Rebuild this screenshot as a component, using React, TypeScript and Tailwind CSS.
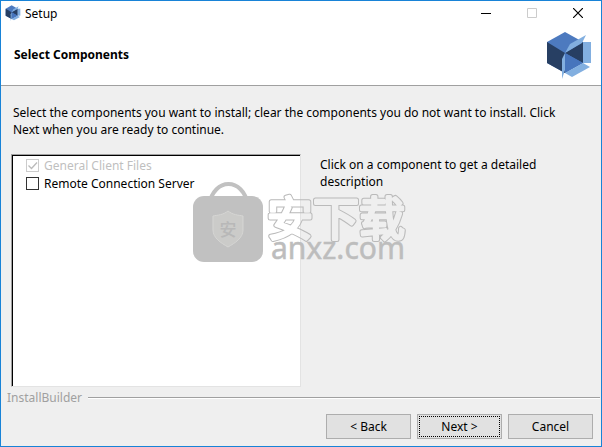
import React from "react";

const components = [
  { id: "client", label: "General Client Files", checked: true, locked: true },
  { id: "server", label: "Remote Connection Server", checked: false, locked: false },
];

const BoxLogo = ({ className }: { className: string }) => (
  <svg viewBox="0 0 46 48" className={className} aria-hidden="true">
    <path d="M1 11 19 1l18 10v21L19 42 1 32z" fill="#4d7abf" />
    <path d="M1 11l18 11v20L1 32z" fill="#273f63" />
    <path d="M19 22l18-11v21z" fill="#273f63" />
    <path d="M19 22 37 32 19 42z" fill="#4775bd" />
    <path d="M37 11h8v21h-8z" fill="#82afe0" />
    <path d="M19 22l5-9L40 4l-4 8z" fill="#82afe0" />
    <path d="M19 22v17l-3 9V28z" fill="#82afe0" />
    <path d="M19 42l18-10 7 4-18 10z" fill="#82afe0" />
  </svg>
);

const Watermark = () => (
  <svg
    viewBox="0 0 220 92"
    className="pointer-events-none absolute top-[27px] left-[181px] h-[92px] w-[220px]"
    aria-hidden="true"
  >
    <defs>
      <mask id="hollow" maskUnits="userSpaceOnUse" x="0" y="0" width="220" height="92">
        <rect width="220" height="92" fill="#fff" />
        <text
          x="75"
          y="54"
          fontSize="46"
          stroke="#000"
          strokeWidth="3"
          strokeLinejoin="round"
          fontFamily="Noto Sans CJK SC, sans-serif"
        >
          安下载
        </text>
      </mask>
    </defs>
    <path d="M17 24C22-4 51-4 56 24" fill="none" stroke="#c1c1c1" strokeWidth="4" />
    <rect x="1" y="15" width="70" height="66" rx="11" fill="#c1c1c1" />
    <path
      d="M36 30c5 4 10 4 15 5v14c0 8-8 13-15 17-7-4-15-9-15-17V35c5-1 10-1 15-5z"
      fill="#cbcbc9"
      stroke="#d6d6d4"
    />
    <text x="36" y="55" textAnchor="middle" fontSize="17" fontWeight="500" fill="#b8b8b8" fontFamily="Noto Sans CJK SC, sans-serif">
      安
    </text>
    <text
      x="75"
      y="54"
      fontSize="46"
      fill="#bababa"
      stroke="#bababa"
      strokeWidth="5"
      strokeLinejoin="round"
      mask="url(#hollow)"
      fontFamily="Noto Sans CJK SC, sans-serif"
    >
      安下载
    </text>
    <text x="79" y="78" fontSize="30" fill="#bdbdbd" stroke="#bdbdbd" strokeWidth="0.5" fontFamily="Noto Sans, sans-serif">
      anxz.com
    </text>
  </svg>
);

const App = () => {
  return (
    <div className="flex min-h-screen flex-col border border-[#1883d7] bg-[#efefef] font-['Noto_Sans',sans-serif] text-[12px] leading-[17px] text-black">
      {/* Title bar */}
      <div className="flex h-6 items-center bg-white pl-1">
        <BoxLogo className="h-4 w-4" />
        <span className="ml-1 grow">Setup</span>
        <button type="button" aria-label="Minimize" className="flex h-6 w-[46px] items-center justify-center">
          <svg viewBox="0 0 10 10" className="h-2.5 w-2.5">
            <path d="M0 5.5h10" stroke="#000" />
          </svg>
        </button>
        <button type="button" aria-label="Maximize" disabled className="flex h-6 w-[46px] items-center justify-center">
          <svg viewBox="0 0 10 10" className="h-2.5 w-2.5">
            <path d="M.5.5h9v9h-9z" fill="none" stroke="#ccc" />
          </svg>
        </button>
        <button type="button" aria-label="Close" className="flex h-6 w-[46px] items-center justify-center">
          <svg viewBox="0 0 10 10" className="h-2.5 w-2.5">
            <path d="M0 0l10 10M10 0L0 10" stroke="#000" strokeWidth="1.2" />
          </svg>
        </button>
      </div>

      {/* Header */}
      <div className="flex h-[61px] items-center justify-between border-b border-[#a0a0a0] bg-white pr-[9px] pl-[13px]">
        <h1 className="pb-0.5 font-bold">Select Components</h1>
        <BoxLogo className="h-12 w-[46px]" />
      </div>

      {/* Component selection */}
      <main className="flex grow flex-col px-[10px] pt-[18px]">
        <p className="pr-5 pl-0.5">
          Select the components you want to install; clear the components you do not want to install. Click Next when
          you are ready to continue.
        </p>
        <div className="relative mt-4 flex grow">
          <div className="flex w-1/2 border border-t-[#a0a0a0] border-r-[#e3e3e3] border-b-[#e3e3e3] border-l-[#a0a0a0]">
            <ul className="grow border-t border-l border-black bg-white pl-[13px]">
              {components.map((item) => (
                <li key={item.id} className="flex h-[18px] items-center">
                  <input
                    id={item.id}
                    type="checkbox"
                    defaultChecked={item.checked}
                    disabled={item.locked}
                    className="peer h-[13px] w-[13px] appearance-none border border-[#333] bg-white disabled:border-[#ccc]"
                  />
                  {item.checked && (
                    <svg viewBox="0 0 13 13" className="pointer-events-none -ml-[13px] h-[13px] w-[13px]">
                      <path d="M2.5 6.5l3 3L11 3.5" fill="none" stroke="#bbb" strokeWidth="1.3" />
                    </svg>
                  )}
                  <label htmlFor={item.id} className="ml-[5px] peer-disabled:text-[#bfbfbf]">
                    {item.label}
                  </label>
                </li>
              ))}
            </ul>
          </div>
          <p className="w-1/2 pr-[18px] pl-[19px] pt-0.5">Click on a component to get a detailed description</p>
          <Watermark />
        </div>
      </main>

      {/* Footer */}
      <footer className="pb-[7px]">
        <div className="flex items-center pt-0.5 pr-px pl-1.5">
          <span className="text-[#a0a0a0]">InstallBuilder</span>
          <hr className="ml-1.5 h-0.5 grow border-t border-b border-t-[#a0a0a0] border-b-white" />
        </div>
        <div className="mt-2 flex justify-end gap-1.5 pr-2">
          <button type="button" className="h-[25px] w-[85px] border border-[#adadad] bg-[#e1e1e1]">
            &lt; Back
          </button>
          <button type="button" className="h-[25px] w-[85px] border border-[#adadad] bg-[#e1e1e1] p-px">
            <span className="flex h-full items-center justify-center border border-dotted border-black">Next &gt;</span>
          </button>
          <button type="button" className="h-[25px] w-[85px] border border-[#adadad] bg-[#e1e1e1]">
            Cancel
          </button>
        </div>
      </footer>
    </div>
  );
};

export default App;
